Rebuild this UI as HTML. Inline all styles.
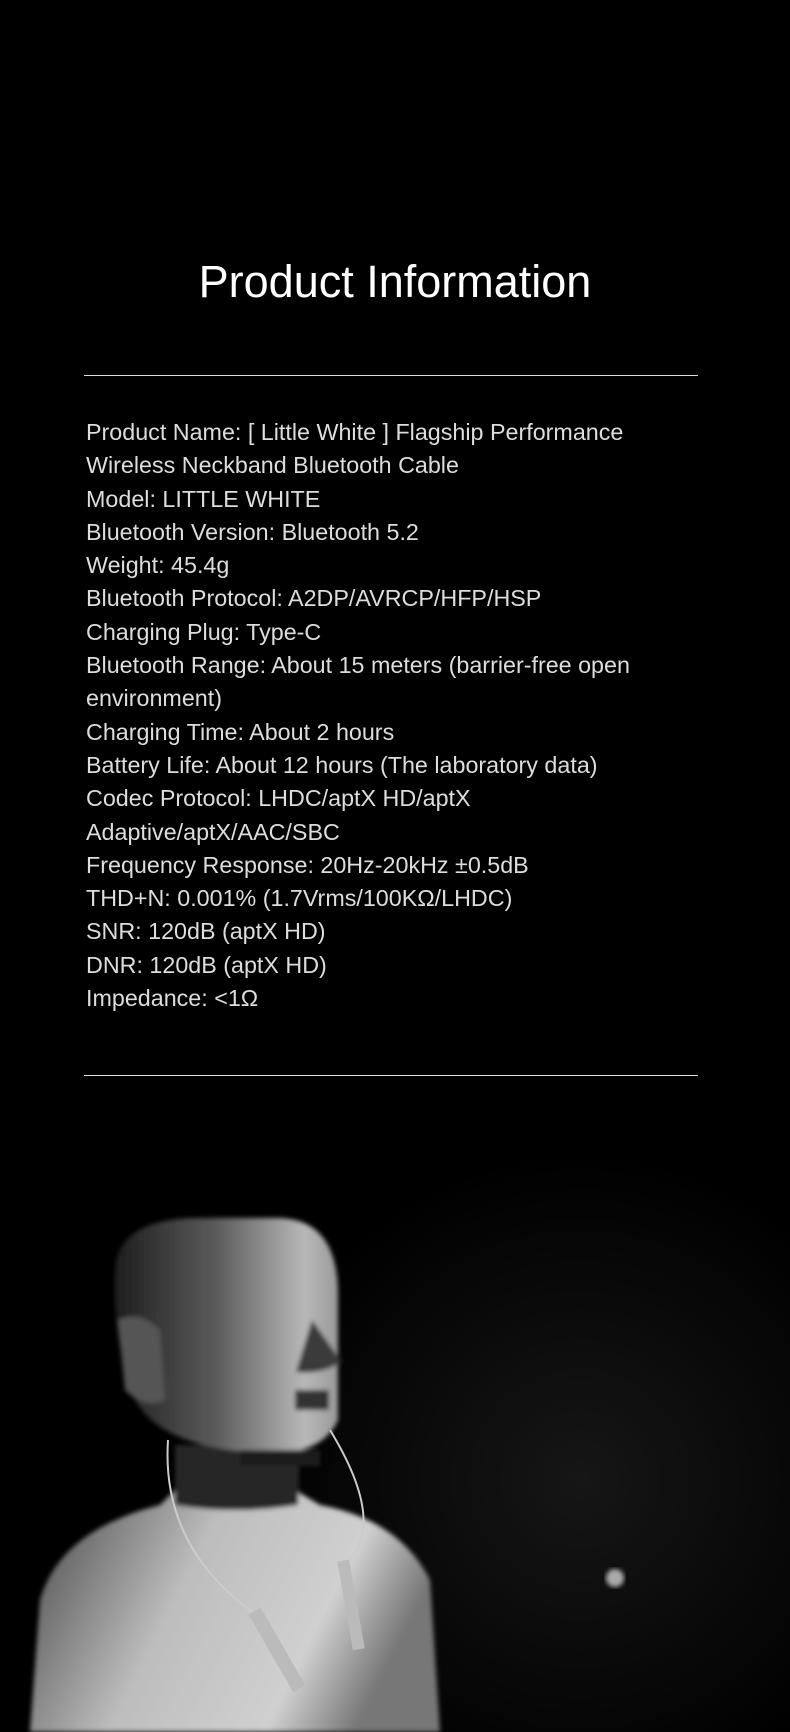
<!DOCTYPE html>
<html><head><meta charset="utf-8"><style>
html,body{margin:0;padding:0;background:#000;}
body{width:790px;height:1732px;position:relative;overflow:hidden;font-family:"Liberation Sans",Arial,sans-serif;}
h1{position:absolute;top:254px;left:0;width:790px;text-align:center;margin:0;font-weight:normal;color:#fff;font-size:45px;line-height:56px;}
.hr{position:absolute;left:84px;width:614px;height:1px;background:#ddd;}
.txt{position:absolute;left:86px;top:416px;color:#ddd;font-size:23.3px;line-height:33.3px;width:680px;white-space:nowrap;}
svg{position:absolute;left:0;top:1150px;}
</style></head><body>
<h1>Product Information</h1>
<div class="hr" style="top:375px"></div>
<div class="txt">
Product Name: [ Little White ] Flagship Performance<br>
Wireless Neckband Bluetooth Cable<br>
Model: LITTLE WHITE<br>
Bluetooth Version: Bluetooth 5.2<br>
Weight: 45.4g<br>
Bluetooth Protocol: A2DP/AVRCP/HFP/HSP<br>
Charging Plug: Type-C<br>
Bluetooth Range: About 15 meters (barrier-free open<br>
environment)<br>
Charging Time: About 2 hours<br>
Battery Life: About 12 hours (The laboratory data)<br>
Codec Protocol: LHDC/aptX HD/aptX<br>
Adaptive/aptX/AAC/SBC<br>
Frequency Response: 20Hz-20kHz ±0.5dB<br>
THD+N: 0.001% (1.7Vrms/100KΩ/LHDC)<br>
SNR: 120dB (aptX HD)<br>
DNR: 120dB (aptX HD)<br>
Impedance: &lt;1Ω
</div>
<div class="hr" style="top:1075px"></div>
<svg width="790" height="582" viewBox="0 1150 790 582">
<defs>
<linearGradient id="hd" x1="0" x2="1" y1="0" y2="0"><stop offset="0" stop-color="#1e1e1e"/><stop offset="0.45" stop-color="#5a5a5a"/><stop offset="0.85" stop-color="#b8b8b8"/><stop offset="1" stop-color="#9a9a9a"/></linearGradient>
<linearGradient id="bd" x1="0" x2="1" y1="0" y2="0.3"><stop offset="0" stop-color="#444"/><stop offset="0.45" stop-color="#bdbdbd"/><stop offset="0.8" stop-color="#d0d0d0"/><stop offset="1" stop-color="#777"/></linearGradient>
<radialGradient id="bg" cx="580" cy="1480" r="330" gradientUnits="userSpaceOnUse"><stop offset="0" stop-color="#161616"/><stop offset="1" stop-color="#000"/></radialGradient>
<filter id="b"><feGaussianBlur stdDeviation="2.5"/></filter>
</defs>
<rect x="0" y="1150" width="790" height="582" fill="url(#bg)"/>
<g filter="url(#b)">
<path d="M30 1732 L40 1600 Q60 1530 160 1505 L175 1490 L295 1490 L320 1505 Q400 1520 430 1580 L440 1732 Z" fill="url(#bd)"/>
<path d="M175 1445 L300 1445 L298 1505 Q235 1515 175 1505 Z" fill="#262626"/>
<path d="M115 1270 Q118 1218 200 1218 L280 1218 Q336 1220 338 1290 L338 1420 Q320 1460 250 1452 Q160 1445 135 1400 Q112 1340 115 1270 Z" fill="url(#hd)"/>
<path d="M118 1320 Q140 1310 160 1330 L165 1400 Q145 1410 125 1390 Z" fill="#555"/>
<path d="M312 1320 L342 1362 Q320 1375 296 1372 Z" fill="#3a3a3a"/>
<rect x="295" y="1390" width="34" height="20" fill="#333"/>
<rect x="240" y="1450" width="80" height="16" fill="#1c1c1c"/>
</g>
<path d="M168 1440 Q160 1560 280 1630 M330 1430 Q385 1520 350 1560" stroke="#ccc" stroke-width="2" fill="none"/>
<rect x="270" y="1605" width="14" height="90" fill="#bbb" transform="rotate(-30 277 1650)"/>
<rect x="345" y="1560" width="12" height="90" fill="#bbb" transform="rotate(-10 351 1605)"/>
<circle cx="615" cy="1578" r="9" fill="#aaa" filter="url(#b)"/>
</svg>
</body></html>
